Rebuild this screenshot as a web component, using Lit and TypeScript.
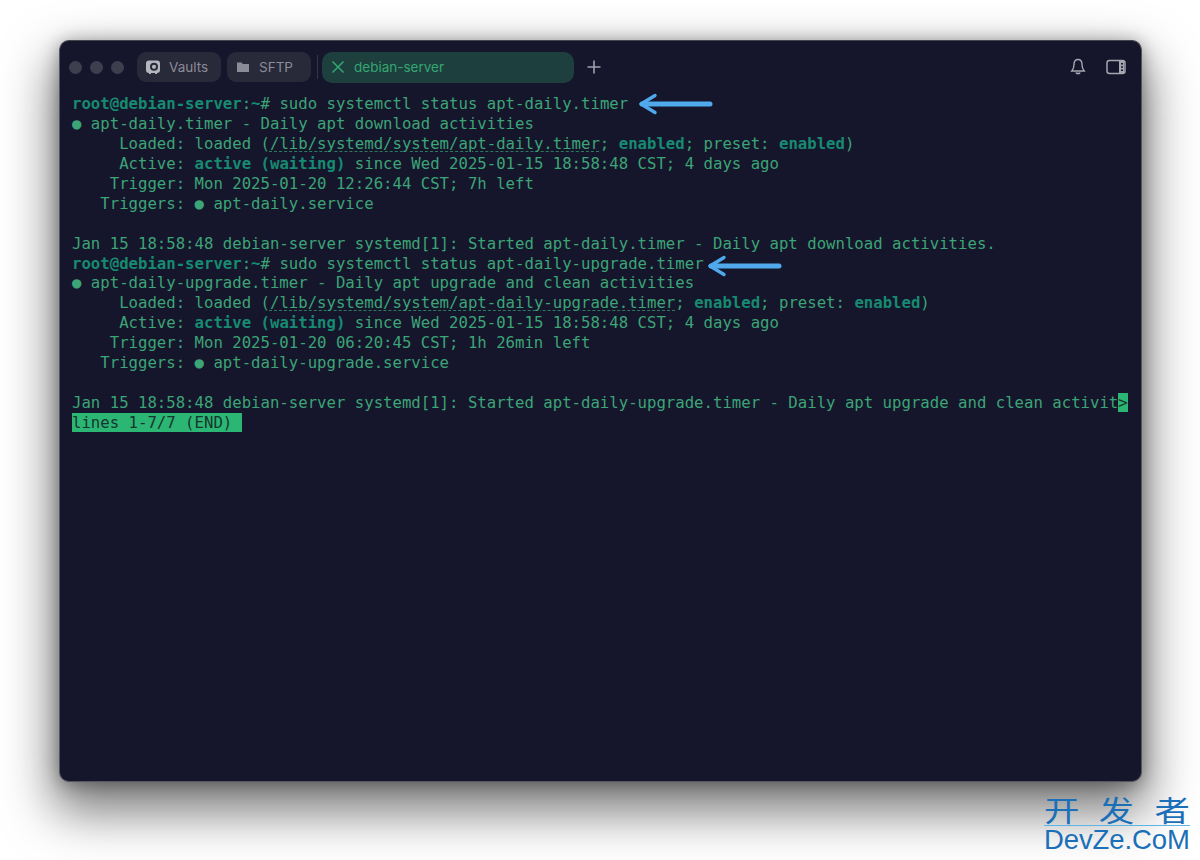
import { LitElement, html, css } from "lit";
import { customElement } from "lit/decorators.js";

const arrow = (cls: string) => html`<svg class="arrow ${cls}" width="76" height="24" viewBox="0 0 76 24" fill="none" stroke="#4fa9ec" stroke-linecap="round" stroke-linejoin="round"><path d="M5 12H73" stroke-width="5"/><path d="M18 3.500L4 12L18 20.500" stroke-width="3.400"/></svg>`;

@customElement("app-root")
export class AppRoot extends LitElement {
  static styles = css`
    :host { display: block; position: relative; width: 1200px; height: 860px; overflow: hidden; background: #fff; box-sizing: border-box; padding: 40px 58px 0 59px; font-family: "Inter", sans-serif; }
    .win { height: 742px; box-sizing: border-box; background: #15162b; border-radius: 10px; border: 1px solid #55565f; border-top-color: #44454d; box-shadow: 0 24px 50px 6px rgba(0,0,0,.52), 0 2px 18px rgba(0,0,0,.35); position: relative; overflow: hidden; display: flex; flex-direction: column; }
    .bar { height: 42px; margin: 5px 0 6px; display: flex; align-items: center; padding-left: 9px; flex: none; }
    .dots { display: flex; gap: 8px; margin-right: 13px; }
    .dot { width: 13px; height: 13px; border-radius: 50%; background: #3e3f4e; }
    .tab { width: 84px; height: 30px; box-sizing: border-box; margin-right: 6px; border-radius: 9px; background: #282939; color: #8b8c98; font-size: 13.5px; display: flex; align-items: center; gap: 8px; padding-left: 8px; }
    .sep { width: 1px; height: 24px; background: #34354a; margin-right: 4px; }
    .active { width: 252px; height: 31px; background: #1d3f3e; color: #36a670; padding-left: 9px; gap: 9px; margin: 0; border-radius: 10px; }
    .plus { margin-left: 13px; display: flex; }
    .right { margin-left: auto; display: flex; align-items: center; gap: 20px; padding-right: 15px; }
    svg { display: block; }
    pre { margin: 0; padding: 0 0 0 12px; font: 15.66px/19.93px "DejaVu Sans Mono", monospace; color: #3ca477; }
    b { color: #178a72; font-weight: 700; }
    .u { text-decoration: underline dashed 1px #2b7a5c; text-underline-offset: 2px; }
    .end { background: #2cb673; color: #15352f; }
    .arrow { position: absolute; }
    .a1 { left: 577px; top: 51px; }
    .a2 { left: 646px; top: 213px; }
    .mark { position: absolute; left: 1044px; top: 794px; width: 146px; color: #1b6fb8; font-family: "Liberation Sans", sans-serif; }
    .cn { font: 29px/31px "Noto Sans CJK SC", sans-serif; display: flex; justify-content: space-between; border-bottom: 1px solid #5fb4e6; height: 31px; }
    .cn span { display: inline-block; transform: scaleX(1.22); transform-origin: center; }
    .cn span:first-child { transform-origin: left; }
    .cn span:last-child { transform-origin: right; }
    .en { font-size: 27.5px; line-height: 27px; letter-spacing: -0.1px; white-space: nowrap; }
  `;

  render() {
    return html`
      <div class="win">
        <div class="bar">
          <div class="dots"><i class="dot"></i><i class="dot"></i><i class="dot"></i></div>
          <div class="tab">
            <svg width="16" height="16" viewBox="0 0 16 16"><path fill="#b4b5bd" fill-rule="evenodd" d="M4 1.500h8a3 3 0 0 1 3 3v6.500a3 3 0 0 1-3 3H12v1H10v-1H6v1H4v-1a3 3 0 0 1-3-3V4.500a3 3 0 0 1 3-3ZM9 3.800a4 4 0 1 0 0 8a4 4 0 0 0 0-8Z"/><circle cx="9" cy="7.800" r="2.100" fill="#b4b5bd"/></svg>
            Vaults
          </div>
          <div class="tab">
            <svg width="16" height="16" viewBox="0 0 16 16"><path fill="#8b8c98" d="M2 3.500h4.500l1.500 1.500h6v8H2Z"/></svg>
            SFTP
          </div>
          <div class="sep"></div>
          <div class="tab active">
            <svg width="14" height="14" viewBox="0 0 14 14" fill="none" stroke="#36a670" stroke-width="1.500"><path d="M1.500 1.500L12.500 12.500M12.500 1.500L1.500 12.500"/></svg>
            debian-server
          </div>
          <div class="plus"><svg width="14" height="14" viewBox="0 0 14 14" stroke="#a0a1ad" stroke-width="1.600"><path d="M7 0.500V13.500M0.500 7H13.500"/></svg></div>
          <div class="right">
            <svg width="16" height="18" viewBox="0 0 16 18" fill="none" stroke="#a5a6b0" stroke-width="1.400"><path d="M8 1.500C5 1.500 4 4 4 6.500C4 9.500 3.500 11 1.800 13H14.200C12.500 11 12 9.500 12 6.500C12 4 11 1.500 8 1.500Z"/><path d="M6 14.500C6.300 16 9.700 16 10 14.500" stroke-width="1.600"/></svg>
            <svg width="20" height="16" viewBox="0 0 20 16"><rect x="1" y="1.500" width="18" height="13" rx="2.500" fill="none" stroke="#a5a6b0" stroke-width="1.500"/><path fill="#a5a6b0" d="M13 2h5v12h-5Z"/><path fill="#15162b" d="M15 4h2v1.500h-2ZM15 7.200h2v1.500h-2ZM15 10.400h2v1.500h-2Z"/></svg>
          </div>
        </div>
        <pre><b>root@debian-server</b>:<b>~</b># sudo systemctl status apt-daily.timer
<span>●</span> apt-daily.timer - Daily apt download activities
     Loaded: loaded (<span class="u">/lib/systemd/system/apt-daily.timer</span>; <b>enabled</b>; preset: <b>enabled</b>)
     Active: <b>active (waiting)</b> since Wed 2025-01-15 18:58:48 CST; 4 days ago
    Trigger: Mon 2025-01-20 12:26:44 CST; 7h left
   Triggers: ● apt-daily.service

Jan 15 18:58:48 debian-server systemd[1]: Started apt-daily.timer - Daily apt download activities.
<b>root@debian-server</b>:<b>~</b># sudo systemctl status apt-daily-upgrade.timer
● apt-daily-upgrade.timer - Daily apt upgrade and clean activities
     Loaded: loaded (<span class="u">/lib/systemd/system/apt-daily-upgrade.timer</span>; <b>enabled</b>; preset: <b>enabled</b>)
     Active: <b>active (waiting)</b> since Wed 2025-01-15 18:58:48 CST; 4 days ago
    Trigger: Mon 2025-01-20 06:20:45 CST; 1h 26min left
   Triggers: ● apt-daily-upgrade.service

Jan 15 18:58:48 debian-server systemd[1]: Started apt-daily-upgrade.timer - Daily apt upgrade and clean activit<span class="end">&gt;</span>
<span class="end">lines 1-7/7 (END) </span></pre>
        ${arrow("a1")}${arrow("a2")}
      </div>
      <div class="mark">
        <div class="cn"><span>开</span><span>发</span><span>者</span></div>
        <div class="en">DevZe.CoM</div>
      </div>
    `;
  }
}
